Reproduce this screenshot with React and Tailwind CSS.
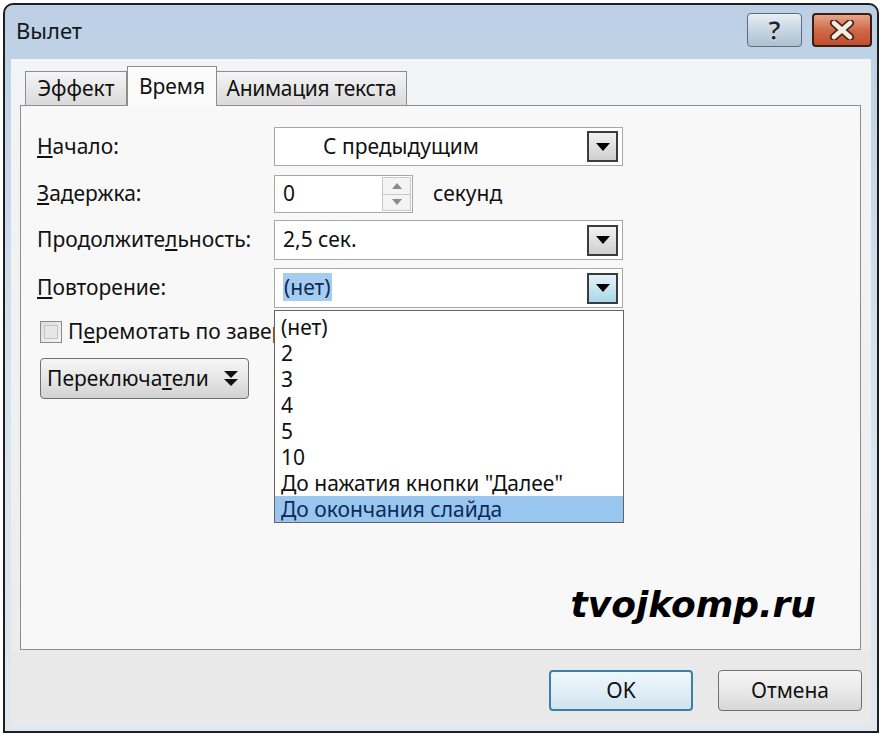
import React from 'react'

const font = { fontFamily: '"Noto Sans", "Open Sans", sans-serif' }

function Arrow({ blue }) {
  return (
    <div
      className={`w-[31px] h-[31px] border-2 border-[#3c3c3c] flex items-center justify-center ${
        blue ? 'bg-gradient-to-b from-[#e4f3fa] to-[#a9d6e9]' : 'bg-gradient-to-b from-[#f2f2f2] to-[#cfcfcf]'
      }`}
    >
      <svg width="14" height="8" viewBox="0 0 14 8">
        <path d="M0 0 H14 L7 8 Z" fill="#000" />
      </svg>
    </div>
  )
}

function Combo({ children, blue }) {
  return (
    <div className="w-[349px] h-full border border-[#a8a8a8] bg-white flex items-center justify-between pl-[8px] pr-[4px]">
      <div className="flex-1 whitespace-nowrap">{children}</div>
      <Arrow blue={blue} />
    </div>
  )
}

const items = ['(нет)', '2', '3', '4', '5', '10', 'До нажатия кнопки "Далее"', 'До окончания слайда']

export default function App() {
  return (
    <div className="w-[884px] h-[738px] bg-white overflow-hidden text-[#111]" style={font}>
      <div className="ml-[3px] mt-[3px] w-[876px] h-[730px] border-2 border-[#1e1e1e] rounded-t-[10px] bg-gradient-to-b from-[#bccfe4] via-[#d6e2ee] to-[#dfe8f1] flex flex-col overflow-hidden">
        {/* заголовок */}
        <div className="h-[54px] flex items-start justify-between pl-[11px] pr-[5px]">
          <div className="mt-[9px] text-[22px] text-[#101820]">Вылет</div>
          <div className="flex gap-[10px] mt-[8px]">
            <div className="w-[55px] h-[34px] rounded-[4px] border border-[#5d6d80] bg-gradient-to-b from-[#e9eff5] via-[#c8d5e2] to-[#aebfd0] flex items-center justify-center">
              <span className="text-[26px] font-bold leading-none text-[#1c2630]" style={{ WebkitTextStroke: '0.5px #fff' }}>?</span>
            </div>
            <div className="w-[60px] h-[34px] rounded-[4px] border-2 border-[#3a1e14] bg-gradient-to-b from-[#e8a48a] via-[#cf6a48] to-[#c24e2c] flex items-center justify-center">
              <svg width="26" height="20" viewBox="0 0 26 20">
                <path d="M5 3 L21 17 M21 3 L5 17" stroke="#4a2618" strokeWidth="8" strokeLinecap="round" />
                <path d="M5 3 L21 17 M21 3 L5 17" stroke="#f4ece4" strokeWidth="4.5" strokeLinecap="round" />
              </svg>
            </div>
          </div>
        </div>

        {/* клиентская область */}
        <div className="flex-1 mx-[6px] mb-[5px] bg-gradient-to-b from-[#f2f4f6] to-[#ececec] flex flex-col">
          {/* вкладки */}
          <div className="flex items-end pl-[14px] h-[46px] text-[21px]">
            <div className="w-[102px] h-[34px] border border-[#8d8d8d] border-b-0 bg-gradient-to-b from-[#f5f5f5] to-[#dadada] flex items-center justify-center">
              Эффект
            </div>
            <div className="w-[90px] h-[40px] border border-[#8d8d8d] border-b-0 bg-[#fbfbfb] flex items-start justify-center pt-[4px] -mb-px relative z-10">
              Время
            </div>
            <div className="w-[190px] h-[34px] border border-[#8d8d8d] border-b-0 border-l-0 bg-gradient-to-b from-[#f5f5f5] to-[#dadada] flex items-center justify-center tracking-[-0.3px]">
              Анимация текста
            </div>
          </div>

          {/* панель */}
          <div className="ml-[9px] w-[841px] h-[545px] border border-[#8d8d8d] bg-[#f9f8f8] relative flex flex-col pl-[16px] text-[21px]">
            <div className="flex items-center h-[39px] mt-[21px]">
              <div className="w-[237px]"><span className="underline underline-offset-2">Н</span>ачало:</div>
              <Combo><span className="pl-[40px]">С предыдущим</span></Combo>
            </div>
            <div className="flex items-center h-[38px] mt-[9px]">
              <div className="w-[237px]"><span className="underline underline-offset-2">З</span>адержка:</div>
              <div className="w-[139px] h-full border border-[#a8a8a8] bg-white flex items-center justify-between pl-[8px] pr-[1px]">
                <span>0</span>
                <div className="w-[29px] h-[34px] flex flex-col border border-[#c8c8c8]">
                  <div className="flex-1 border-b border-[#c8c8c8] bg-[#f4f4f4] flex items-center justify-center">
                    <svg width="10" height="6" viewBox="0 0 10 6"><path d="M0 6 L5 0 L10 6 Z" fill="#8a8a8a" /></svg>
                  </div>
                  <div className="flex-1 bg-[#f4f4f4] flex items-center justify-center">
                    <svg width="10" height="6" viewBox="0 0 10 6"><path d="M0 0 H10 L5 6 Z" fill="#8a8a8a" /></svg>
                  </div>
                </div>
              </div>
              <div className="ml-[20px]">секунд</div>
            </div>
            <div className="flex items-center h-[40px] mt-[7px]">
              <div className="w-[237px] whitespace-nowrap">Продолжите<span className="underline underline-offset-2">л</span>ьность:</div>
              <Combo>2,5 сек.</Combo>
            </div>
            <div className="flex items-center h-[40px] mt-[8px]">
              <div className="w-[237px]"><span className="underline underline-offset-2">П</span>овторение:</div>
              <Combo blue>
                <span className="bg-[#a6cdf0] text-[#0c2a5a] px-[1px]">(нет)</span>
              </Combo>
            </div>

            <div className="flex items-center mt-[12px] h-[23px] gap-[6px] w-[237px] overflow-hidden whitespace-nowrap">
              <div className="w-[22px] h-[22px] shrink-0 ml-[3px] border border-[#8a8a8a] bg-gradient-to-br from-[#dcdcdc] to-[#f6f6f6] p-[3px]">
                <div className="w-full h-full border border-[#c4c4c4] bg-[#e6e6e6]" />
              </div>
              <span>П<span className="underline underline-offset-2">е</span>ремотать по завершении</span>
            </div>

            <div className="mt-[15px] ml-[3px] w-[209px] h-[41px] rounded-[4px] border border-[#6f6f6f] bg-gradient-to-b from-[#f6f6f6] via-[#e6e6e6] to-[#d2d2d2] flex items-center justify-between pl-[6px] pr-[9px]">
              <span>Переключа<span className="underline underline-offset-2">т</span>ели</span>
              <svg width="16" height="18" viewBox="0 0 16 18">
                <path d="M1 1 H15 L8 8 Z" fill="#111" />
                <path d="M1 9 H15 L8 16 Z" fill="#111" />
              </svg>
            </div>

            <div className="mt-auto mb-[17px] self-end mr-[44px] text-[36px] font-bold italic text-black" style={{ fontFamily: '"DejaVu Sans", sans-serif' }}>
              tvojkomp.ru
            </div>

            {/* раскрытый список */}
            <div className="absolute left-[253px] top-[204px] w-[350px] h-[213px] border border-[#646464] bg-white flex flex-col pt-[3px]">
              {items.map((t, i) => (
                <div
                  key={i}
                  className={`h-[26px] leading-[26px] pl-[6px] whitespace-nowrap ${i === items.length - 1 ? 'bg-[#99c6ee] text-[#0c2a5a]' : ''}`}
                >
                  {t}
                </div>
              ))}
            </div>
          </div>

          {/* кнопки */}
          <div className="flex-1 bg-[#e9e9e9] flex justify-end items-start pt-[20px] pr-[9px] gap-[25px] text-[21px]">
            <div className="w-[144px] h-[41px] rounded-[4px] border-2 border-[#3d7fa8] bg-gradient-to-b from-[#eef7fc] via-[#e2eef6] to-[#cfe3ef] flex items-center justify-center">
              OK
            </div>
            <div className="w-[144px] h-[41px] rounded-[4px] border border-[#6f6f6f] bg-gradient-to-b from-[#f6f6f6] via-[#e9e9e9] to-[#d8d8d8] flex items-center justify-center">
              Отмена
            </div>
          </div>
        </div>
      </div>
    </div>
  )
}
